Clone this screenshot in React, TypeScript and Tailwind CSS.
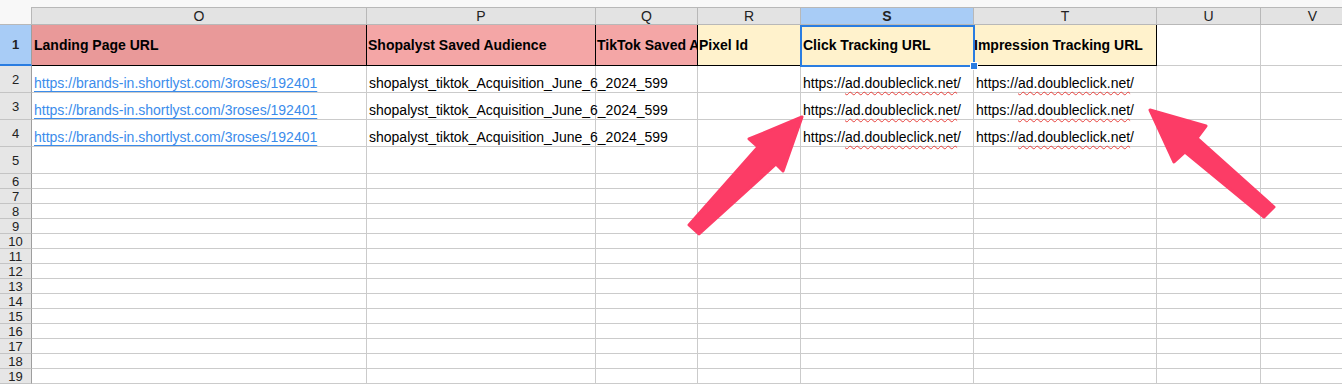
import React from 'react';

const GRID = 'grid grid-cols-[32px_335px_229px_102px_103px_173px_183px_104px_104px]';
const LETTERS = ['O', 'P', 'Q', 'R', 'S', 'T', 'U', 'V'];

const HEADERS = [
  { text: 'Landing Page URL', bg: 'bg-[#e99999]', pad: 'pl-[2px]' },
  { text: 'Shopalyst Saved Audience', bg: 'bg-[#f4a6a6]', pad: 'pl-[1px]' },
  { text: 'TikTok Saved Audience', bg: 'bg-[#f4a6a6]', pad: 'pl-[1px]' },
  { text: 'Pixel Id', bg: 'bg-[#fff2cc]', pad: 'pl-[1px]' },
  { text: 'Click Tracking URL', bg: 'bg-[#fff2cc]', pad: 'pl-[2px]' },
  { text: 'Impression Tracking URL', bg: 'bg-[#fff2cc]', pad: 'pl-0' },
];

const TrackingUrl = () => (
  <span>
    https://
    <span className="underline decoration-wavy decoration-[#e8413c] decoration-1 underline-offset-[3px]">
      ad.doubleclick.net
    </span>
    /
  </span>
);

const RowHead = ({ n, h, selected }: { n: number; h: string; selected?: boolean }) => (
  <div
    className={`${h} flex items-center justify-center border-r border-r-[#9e9e9e] ${
      selected
        ? 'bg-[#a8ccf6] font-bold border-b-2 border-b-[#2a7de1]'
        : 'bg-[#e6e6e6] border-b border-b-[#c4c4c4]'
    } text-[13px] leading-[13px] text-[#222]`}
  >
    {n}
  </div>
);

const Cell = ({ children, className = '' }: { children?: React.ReactNode; className?: string }) => (
  <div className={`flex items-end whitespace-nowrap border-r border-b border-[#cbcbcb] pl-[2px] ${className}`}>
    {children}
  </div>
);

const Arrow = ({ points }: { points: string }) => (
  <polygon points={points} fill="#fc3c66" stroke="#fc3c66" strokeWidth={3} strokeLinejoin="round" />
);

export default function App() {
  const dataRows = [2, 3, 4];
  const emptyRows = Array.from({ length: 15 }, (_, i) => i + 5);

  return (
    <div className="relative w-[1342px] h-[384px] overflow-hidden bg-white font-['Liberation_Sans',Arial,sans-serif] text-[14px] text-black">
      <div className="h-[7px] bg-[#f8f8f8]" />

      {/* column letters */}
      <div className={`${GRID} h-[18px]`}>
        <div className="bg-[#f8f8f8] border-r border-b border-[#b8b8b8]" />
        {LETTERS.map((l) => (
          <div
            key={l}
            className={`flex items-center justify-center border-t border-r border-b border-[#b8b8b8] leading-[16px] text-[#222] ${
              l === 'S' ? 'bg-[#a8ccf6] font-bold' : 'bg-[#e3e3e3]'
            }`}
          >
            {l}
          </div>
        ))}
      </div>

      {/* row 1 */}
      <div className={`${GRID} h-[41px]`}>
        <RowHead n={1} h="h-[41px]" selected />
        {HEADERS.map((c) => (
          <div
            key={c.text}
            className={`relative flex items-center whitespace-nowrap overflow-hidden border-r border-b border-black font-bold leading-[17px] ${c.bg} ${c.pad}`}
          >
            {c.text}
          </div>
        ))}
        <div className="border-r border-b border-[#cbcbcb]" />
        <div className="border-r border-b border-[#cbcbcb]" />
      </div>

      {/* data rows */}
      {dataRows.map((n) => (
        <div key={n} className={`${GRID} h-[27px]`}>
          <RowHead n={n} h="h-[27px]" />
          <Cell className="leading-[17px]">
            <span className="text-[#3b8ceb] underline decoration-[#3b8ceb] underline-offset-[3px]">
              https://brands-in.shortlyst.com/3roses/192401
            </span>
          </Cell>
          <Cell className="leading-[17px] pl-[1px]">shopalyst_tiktok_Acquisition_June_6_2024_599</Cell>
          <Cell />
          <Cell />
          <Cell className="leading-[17px]">
            <TrackingUrl />
          </Cell>
          <Cell className="leading-[17px] pl-[1px]">
            <TrackingUrl />
          </Cell>
          <Cell />
          <Cell />
        </div>
      ))}

      {/* empty rows */}
      {emptyRows.map((n) => {
        const h = n === 5 ? 'h-[27px]' : 'h-[15px]';
        return (
          <div key={n} className={`${GRID} ${h}`}>
            <RowHead n={n} h={h} />
            {LETTERS.map((l) => (
              <Cell key={l} />
            ))}
          </div>
        );
      })}

      {/* selection around S1 */}
      <div className="pointer-events-none absolute left-[800px] top-[25px] w-[175px] h-[42px] border-2 border-[#2a7de1]">
        <div className="absolute right-[-5px] bottom-[-5px] w-[8px] h-[8px] bg-[#2a7de1] border border-white" />
      </div>

      {/* annotation arrows */}
      <svg className="pointer-events-none absolute inset-0" width="1342" height="384" viewBox="0 0 1342 384">
        <Arrow points="802,117 749,139 758,147 689,225 699,234 776,164 783,171" />
        <Arrow points="1150,110 1206,126 1197,138 1274,207 1264,217 1185,152 1174,162" />
      </svg>
    </div>
  );
}
